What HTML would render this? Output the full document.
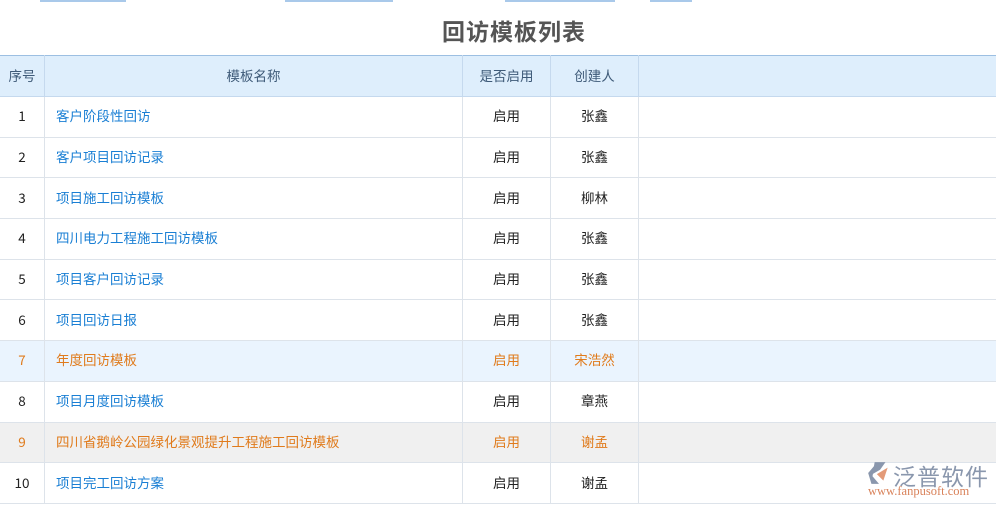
<!DOCTYPE html><html><head><meta charset="utf-8"><style>
body{margin:0;width:996px;height:507px;overflow:hidden;background:#fff;font-family:"Liberation Sans","Noto Sans CJK SC",sans-serif;position:relative}
.bar{position:absolute;top:0;height:2px;background:#a9c9ea}
h1{position:absolute;top:13px;left:0;width:1028px;text-align:center;margin:0;font-size:23px;color:#555;font-weight:bold;letter-spacing:1px}
table{position:absolute;top:55px;left:0;border-collapse:collapse;width:996px;font-size:13.5px;font-family:"Noto Sans CJK SC",sans-serif;line-height:16px}
td,th{border:1px solid #dde3ea;border-top:none;padding:0 0 3px 0;text-align:center;color:#222;vertical-align:middle}
tr{height:40.7px}
th{background:#deeefc;font-weight:normal;color:#3e5a78;border-color:#c5d9ee;height:37px;border-top:1px solid #9cbfe2}
td:first-child,th:first-child{border-left:none}
td:last-child,th:last-child{border-right:none}
td.n{text-align:left;padding-left:11px;color:#1a7fd4}
tr.o td{color:#e07b1c}
tr.b td{background:#eaf4fe}
tr.g td{background:#f0f0f0}
</style></head><body>
<div class="bar" style="left:40px;width:86px"></div><div class="bar" style="left:285px;width:108px"></div><div class="bar" style="left:505px;width:110px"></div><div class="bar" style="left:650px;width:42px"></div>
<h1>回访模板列表</h1>
<table>
<tr><th style="width:44px">序号</th><th style="width:417px">模板名称</th><th style="width:87px">是否启用</th><th style="width:87px">创建人</th><th></th></tr>
<tr><td>1</td><td class="n">客户阶段性回访</td><td>启用</td><td>张鑫</td><td></td></tr>
<tr><td>2</td><td class="n">客户项目回访记录</td><td>启用</td><td>张鑫</td><td></td></tr>
<tr><td>3</td><td class="n">项目施工回访模板</td><td>启用</td><td>柳林</td><td></td></tr>
<tr><td>4</td><td class="n">四川电力工程施工回访模板</td><td>启用</td><td>张鑫</td><td></td></tr>
<tr><td>5</td><td class="n">项目客户回访记录</td><td>启用</td><td>张鑫</td><td></td></tr>
<tr><td>6</td><td class="n">项目回访日报</td><td>启用</td><td>张鑫</td><td></td></tr>
<tr class="o b"><td>7</td><td class="n">年度回访模板</td><td>启用</td><td>宋浩然</td><td></td></tr>
<tr><td>8</td><td class="n">项目月度回访模板</td><td>启用</td><td>章燕</td><td></td></tr>
<tr class="o g"><td>9</td><td class="n">四川省鹅岭公园绿化景观提升工程施工回访模板</td><td>启用</td><td>谢孟</td><td></td></tr>
<tr><td>10</td><td class="n">项目完工回访方案</td><td>启用</td><td>谢孟</td><td></td></tr>
</table>
<div style="position:absolute;left:866px;top:461px;width:26px;height:24px">
<svg width="26" height="24" viewBox="0 0 24 22"><path d="M8 1 L18 1 L13 8 L6 12 Z" fill="#8a97ad"/><path d="M2 11 L8 4 L6 14 L12 21 L5 21 Z" fill="#8a97ad"/><path d="M10 12 L20 6 L16 18 Z" fill="#e39a78"/></svg></div>
<div style="position:absolute;left:893px;top:458px;font-size:23px;color:#8a97ad;letter-spacing:1px">泛普软件</div>
<div style="position:absolute;left:868px;top:484px;font-size:12.5px;color:#d9825a;font-family:'Liberation Serif',serif">www.fanpusoft.com</div>
</body></html>
